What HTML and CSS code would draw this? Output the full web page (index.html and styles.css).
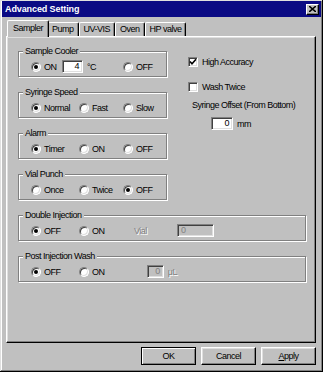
FILE: index.html
```html
<!DOCTYPE html>
<html lang="en">
<head>
  <meta charset="UTF-8" />
  <title>Advanced Setting</title>
  <link rel="stylesheet" href="styles.css">
</head>
<body>

  <div class="window">
    <div class="titlebar">
      <span class="title">Advanced Setting</span>
      <span class="close">
        <svg width="7" height="6" viewBox="0 0 7 6"><path d="M0 0 L7 6 M7 0 L0 6" stroke="#000" stroke-width="1.6"/></svg>
      </span>
    </div>

    <div class="content">
      <div class="tabs">
        <div class="tab active">Sampler</div>
        <div class="tab">Pump</div>
        <div class="tab">UV-VIS</div>
        <div class="tab">Oven</div>
        <div class="tab">HP valve</div>
      </div>

      <div class="panel">
        <div class="top">
          <div class="col-left">
            <div class="group">
              <div class="legend">Sample Cooler</div>
              <div class="row row-cooler">
                <label class="opt"><span class="radio checked"></span>ON</label>
                <span class="field">4</span>
                <span class="unit">°C</span>
                <label class="opt"><span class="radio"></span>OFF</label>
              </div>
            </div>

            <div class="group">
              <div class="legend">Syringe Speed</div>
              <div class="row">
                <label class="opt"><span class="radio checked"></span>Normal</label>
                <label class="opt"><span class="radio"></span>Fast</label>
                <label class="opt"><span class="radio"></span>Slow</label>
              </div>
            </div>

            <div class="group">
              <div class="legend">Alarm</div>
              <div class="row">
                <label class="opt"><span class="radio checked"></span>Timer</label>
                <label class="opt"><span class="radio"></span>ON</label>
                <label class="opt"><span class="radio"></span>OFF</label>
              </div>
            </div>

            <div class="group">
              <div class="legend">Vial Punch</div>
              <div class="row">
                <label class="opt"><span class="radio"></span>Once</label>
                <label class="opt"><span class="radio"></span>Twice</label>
                <label class="opt"><span class="radio checked"></span>OFF</label>
              </div>
            </div>
          </div>

          <div class="col-right">
            <label class="check-row">
              <span class="checkbox">
                <svg width="8" height="8" viewBox="0 0 8 8"><path d="M1 3.5 L3 5.8 L7 1.2" fill="none" stroke="#000" stroke-width="1.6"/></svg>
              </span>
              High Accuracy
            </label>
            <label class="check-row wash">
              <span class="checkbox"></span>
              Wash Twice
            </label>
            <div class="offset-label">Syringe Offset (From Bottom)</div>
            <div class="offset-row">
              <span class="field field-wide">0</span>
              <span class="unit">mm</span>
            </div>
          </div>
        </div>

        <div class="group wide">
          <div class="legend">Double Injection</div>
          <div class="row row-wide">
            <label class="opt"><span class="radio checked"></span>OFF</label>
            <label class="opt"><span class="radio"></span>ON</label>
            <span class="disabled vial">Vial</span>
            <span class="field disabled-field left">0</span>
          </div>
        </div>

        <div class="group wide">
          <div class="legend">Post Injection Wash</div>
          <div class="row row-wide">
            <label class="opt"><span class="radio checked"></span>OFF</label>
            <label class="opt"><span class="radio"></span>ON</label>
            <span class="wash-vol">
              <span class="field disabled-field">0</span>
              <span class="disabled">μL</span>
            </span>
          </div>
        </div>
      </div>

      <div class="buttons">
        <button type="button" class="btn default">OK</button>
        <button type="button" class="btn">Cancel</button>
        <button type="button" class="btn"><u>A</u>pply</button>
      </div>
    </div>
  </div>

</body>
</html>
```

FILE: styles.css
```css
body {
  margin: 0;
  background: #c0c0c0;
  font-family: "Liberation Sans", Arial, sans-serif;
  font-size: 9px;
  letter-spacing: -0.5px;
  color: #000;
}
.window {
  width: 323px;
  height: 372px;
  box-sizing: border-box;
  padding: 1px 2px 2px;
  background: #c0c0c0;
  box-shadow: inset -1px -1px #000, inset 1px 1px #dfdfdf, inset -2px -2px #808080, inset 2px 2px #fff;
}
.titlebar {
  height: 16px;
  background: #0a0a84;
  display: flex;
  align-items: center;
  justify-content: space-between;
  padding: 0 2px 0 3px;
}
.title {
  color: #fff;
  font-weight: bold;
  letter-spacing: -0.1px;
}
.close {
  width: 13px;
  height: 11px;
  box-sizing: border-box;
  background: #c0c0c0;
  border: 1px solid;
  border-color: #fff #000 #000 #fff;
  box-shadow: inset -1px -1px #808080;
  display: flex;
  align-items: center;
  justify-content: center;
}
.content {
  padding: 3px 5px 0 4px;
}
.tabs {
  display: flex;
  align-items: flex-end;
  height: 16px;
  padding-left: 3px;
}
.tab {
  height: 14px;
  box-sizing: border-box;
  padding: 0 4px;
  line-height: 12px;
  border-top: 1px solid #fff;
  border-left: 1px solid #fff;
  border-right: 1px solid #000;
  border-radius: 2px 2px 0 0;
  box-shadow: inset -1px 0 #808080;
  background: #c0c0c0;
}
.tab.active {
  height: 17px;
  margin: 0 -1px -1px -2px;
  padding: 0 5px;
  line-height: 14px;
  position: relative;
  z-index: 1;
}
.tab.active + .tab {
  border-left: none;
}
.panel {
  height: 307px;
  box-sizing: border-box;
  border: 1px solid;
  border-color: #fff #000 #000 #fff;
  box-shadow: inset -1px -1px #808080, inset 1px 1px #dfdfdf;
  padding: 14px 0 0 11px;
}
.top {
  display: flex;
}
.col-left {
  width: 149px;
}
.group {
  height: 26px;
  box-sizing: border-box;
  border: 1px solid #808080;
  box-shadow: 1px 1px 0 #fff, inset 1px 1px 0 #fff;
  margin-bottom: 15px;
}
.group.wide {
  width: 288px;
}
.legend {
  width: fit-content;
  height: 13px;
  line-height: 13px;
  margin: -7px 0 0 4px;
  padding: 0 2px;
  background: #c0c0c0;
}
.row {
  display: grid;
  grid-template-columns: 48px 44px auto;
  align-items: center;
  height: 13px;
  margin-top: 2px;
  padding-left: 12px;
}
.row-cooler {
  grid-template-columns: 31px 21px 40px auto;
}
.row-wide {
  grid-template-columns: 48px 44px 54px auto;
}
.opt {
  display: flex;
  align-items: center;
  gap: 3px;
}
.radio {
  width: 10px;
  height: 10px;
  box-sizing: border-box;
  border-radius: 50%;
  background: #fff;
  border: 1px solid;
  border-color: #808080 #fff #fff #808080;
  box-shadow: inset 1px 1px #404040, inset -1px -1px #dfdfdf;
  display: flex;
  align-items: center;
  justify-content: center;
}
.radio.checked::after {
  content: "";
  width: 4px;
  height: 4px;
  border-radius: 50%;
  background: #000;
}
.field {
  height: 13px;
  box-sizing: border-box;
  border: 1px solid;
  border-color: #808080 #fff #fff #808080;
  box-shadow: inset 1px 1px #404040, inset -1px -1px #dfdfdf;
  background: #fff;
  text-align: right;
  padding-right: 3px;
  line-height: 11px;
}
.unit {
  padding-left: 4px;
}
.col-right {
  padding: 4px 0 0 21px;
}
.check-row {
  display: flex;
  align-items: center;
  gap: 4px;
  height: 13px;
}
.check-row.wash {
  margin-top: 12px;
}
.checkbox {
  width: 10px;
  height: 10px;
  box-sizing: border-box;
  background: #fff;
  border: 1px solid;
  border-color: #808080 #fff #fff #808080;
  box-shadow: inset 1px 1px #404040, inset -1px -1px #dfdfdf;
  display: flex;
  align-items: center;
  justify-content: center;
}
.offset-label {
  height: 13px;
  line-height: 13px;
  margin-top: 6px;
  padding-left: 4px;
  white-space: nowrap;
}
.offset-row {
  display: flex;
  align-items: center;
  margin-top: 5px;
  padding-left: 23px;
}
.field-wide {
  width: 22px;
}
.row-cooler .field {
  width: 21px;
}
.disabled {
  color: #808080;
  text-shadow: 1px 1px #fff;
}
.vial {
  padding-left: 11px;
}
.disabled-field {
  background: #c0c0c0;
  color: #808080;
  width: 37px;
}
.disabled-field.left {
  text-align: left;
  padding-left: 3px;
}
.wash-vol {
  display: flex;
  align-items: center;
  gap: 4px;
  padding-left: 24px;
}
.wash-vol .disabled-field {
  width: 21px;
}
.buttons {
  display: flex;
  justify-content: flex-end;
  gap: 5px;
  margin-top: 4px;
}
.btn {
  width: 55px;
  height: 18px;
  padding: 0;
  font: inherit;
  letter-spacing: inherit;
  background: #c0c0c0;
  border: 1px solid;
  border-color: #fff #000 #000 #fff;
  box-shadow: inset -1px -1px #808080, inset 1px 1px #dfdfdf;
}
.btn.default {
  outline: 1px solid #000;
  outline-offset: -1px;
  border-color: #000;
  box-shadow: inset 1px 1px #fff, inset -1px -1px #808080;
}
```
